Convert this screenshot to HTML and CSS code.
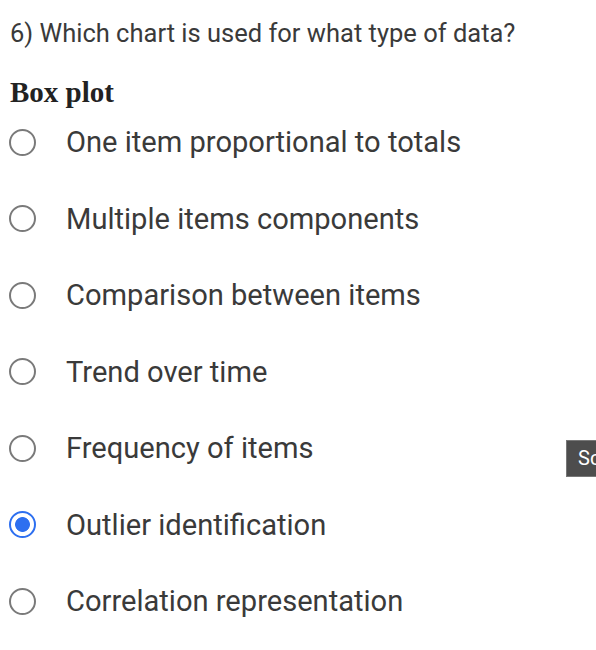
FILE: index.html
```html
<!DOCTYPE html>
<html>
<head>
<meta charset="utf-8">
<link rel="stylesheet" href="styles.css">
</head>
<body>
<div class="quiz">
  <p class="question">6) Which chart is used for what type of data?</p>
  <h2 class="topic">Box plot</h2>
  <ul class="options">
    <li class="option"><span class="radio"></span><span class="label">One item proportional to totals</span></li>
    <li class="option"><span class="radio"></span><span class="label">Multiple items components</span></li>
    <li class="option"><span class="radio"></span><span class="label">Comparison between items</span></li>
    <li class="option"><span class="radio"></span><span class="label">Trend over time</span></li>
    <li class="option"><span class="radio"></span><span class="label">Frequency of items</span></li>
    <li class="option"><span class="radio checked"></span><span class="label">Outlier identification</span></li>
    <li class="option"><span class="radio"></span><span class="label">Correlation representation</span></li>
  </ul>
  <div class="tip">Sc</div>
</div>
</body>
</html>
```
FILE: styles.css
```css
html, body {
  margin: 0;
  padding: 0;
  background: #fff;
}
.quiz {
  position: relative;
  width: 596px;
  height: 650px;
  overflow: hidden;
  padding: 18px 0 0 10px;
  box-sizing: border-box;
}
.question {
  margin: 0;
  font-family: Roboto, sans-serif;
  font-size: 25.5px;
  line-height: 30px;
  color: #3a3a3a;
}
.topic {
  margin: 29px 0 0 0;
  font-family: "Liberation Serif", serif;
  font-weight: bold;
  font-size: 29px;
  line-height: 30px;
  color: #222;
}
.options {
  list-style: none;
  margin: 0;
  padding: 0;
}
.option {
  display: flex;
  align-items: center;
  height: 76.5px;
}
.options .option:first-child {
  margin-top: -3px;
}
.radio {
  width: 27px;
  height: 27px;
  border: 2.5px solid #7a7a7a;
  border-radius: 50%;
  box-sizing: border-box;
  flex: none;
  margin-left: -1px;
}
.radio.checked {
  border-color: #2d6ff0;
  background: radial-gradient(circle, #2d6ff0 0 7px, #fff 7.8px);
}
.label {
  margin-left: 30px;
  font-family: Roboto, sans-serif;
  font-size: 29.1px;
  color: #3a3a3a;
}
.tip {
  position: absolute;
  left: 566px;
  top: 440px;
  width: 40px;
  height: 37px;
  background: #4d4d4d;
  border: 1px solid #777;
  box-sizing: border-box;
  color: #fff;
  font-family: Roboto, sans-serif;
  font-size: 20px;
  line-height: 35px;
  padding-left: 11px;
  white-space: nowrap;
}
```
